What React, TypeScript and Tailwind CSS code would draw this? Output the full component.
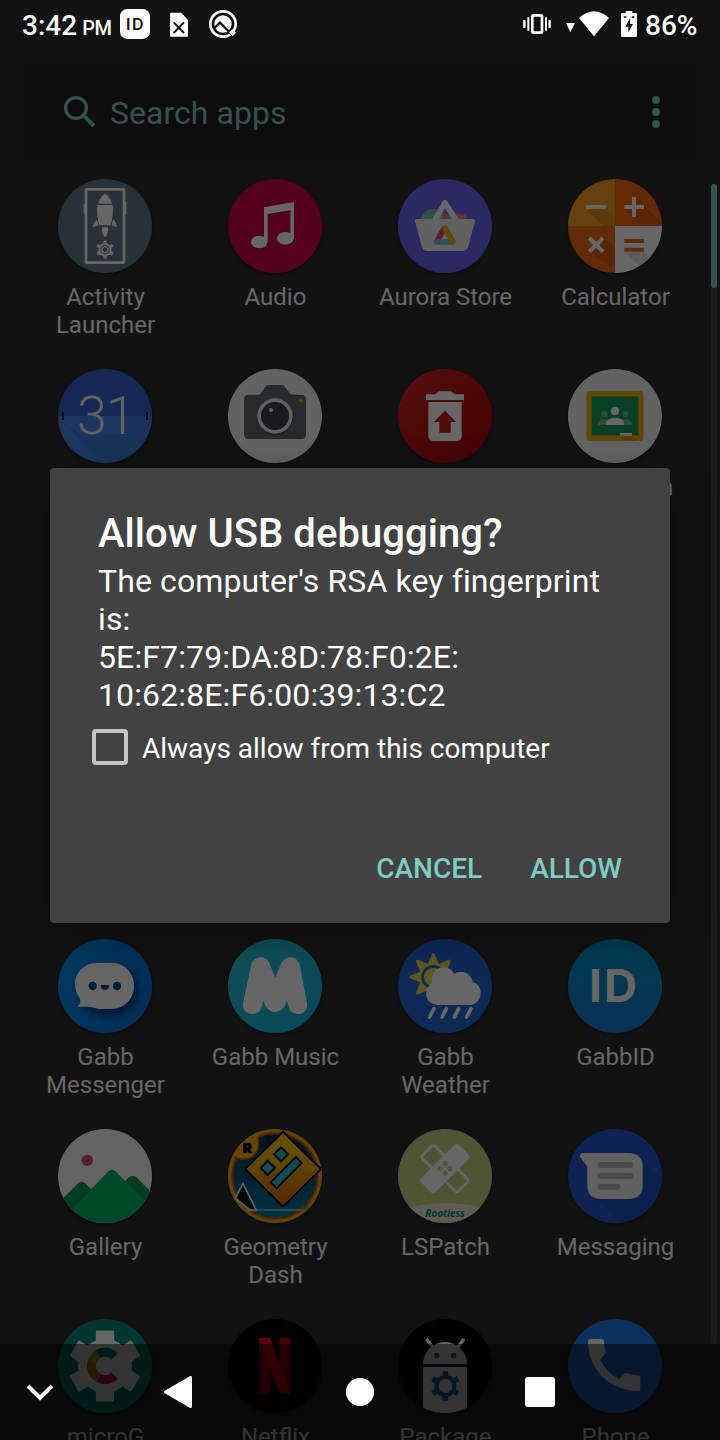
import React from 'react';

type IconProps = { box: string; children: React.ReactNode };

function AppIcon({ box, children }: IconProps) {
  return (
    <svg viewBox={box} className="size-[94px] shrink-0 rounded-full shadow-[0_1px_3px_rgba(0,0,0,0.5)]">
      {children}
    </svg>
  );
}

function gearPath(cx: number, cy: number, outer: number, inner: number, teeth: number, top: number, base: number) {
  const points: string[] = [];
  for (let i = 0; i < teeth; i++) {
    const mid = (i * 2 * Math.PI) / teeth - Math.PI / 2;
    const at = (r: number, a: number) => `${(cx + r * Math.cos(a)).toFixed(1)} ${(cy + r * Math.sin(a)).toFixed(1)}`;
    points.push(at(inner, mid - base), at(outer, mid - top), at(outer, mid + top), at(inner, mid + base));
  }
  return `M${points.join('L')}Z`;
}

const ActivityIcon = () => (
  <AppIcon box="84 27 282 282">
    <rect x="84" y="27" width="282" height="282" fill="#607d8b" />
    <rect x="168" y="58" width="114" height="220" rx="2" fill="none" stroke="#fff" strokeWidth="8" />
    <path d="M163 102v28M287 96v38" stroke="#fff" strokeWidth="4" />
    <path d="M225 71c-10 6-18 18-21 30h42c-3-12-11-24-21-30ZM202 105h46c2 20 0 42-6 61h-34c-6-19-8-41-6-61Z" fill="#fff" />
    <path d="M201 149c-8 6-12 14-12 23 5-3 10-5 17-5Zm48 0c8 6 12 14 12 23-5-3-10-5-17-5ZM216 172h18c2 12-2 23-9 31-7-8-11-19-9-31Z" fill="#fff" />
    <path d={gearPath(225, 239, 27, 20, 6, 0.17, 0.27)} fill="#fff" />
    <circle cx="225" cy="239" r="14" fill="#607d8b" />
    <circle cx="225" cy="239" r="9" fill="none" stroke="#fff" strokeWidth="4" />
  </AppIcon>
);

const AudioIcon = () => (
  <AppIcon box="594 27 282 282">
    <rect x="594" y="27" width="282" height="282" fill="#cf0048" />
    <g transform="translate(1 3)" fill="#8c0030" opacity="0.6">
      <ellipse cx="688" cy="216" rx="25" ry="19" />
      <ellipse cx="766" cy="205" rx="25" ry="19" />
    </g>
    <path d="M702 112 792 96V206H781V121L713 132V217H702Z" fill="#fff" />
    <ellipse cx="688" cy="216" rx="25" ry="19" fill="#fff" />
    <ellipse cx="766" cy="205" rx="25" ry="19" fill="#fff" />
  </AppIcon>
);

const AuroraIcon = () => (
  <AppIcon box="54 27 282 282">
    <rect x="54" y="27" width="282" height="282" fill="#6f64f2" />
    <circle cx="160" cy="158" r="41" fill="#7fc4b0" />
    <rect x="188" y="131" width="71" height="34" rx="10" fill="#ef8091" />
    <path d="M165 150 195 98 228 150" fill="none" stroke="#fff" strokeWidth="17" strokeLinejoin="round" />
    <path d="M110 147H280q6 0 5 7L264 232q-4 11-15 11H141q-11 0-15-11L105 154q-1-7 5-7Z" fill="#f2f2f2" />
    <path d="M171 213 191 178" stroke="#e8487e" strokeWidth="17" strokeLinecap="round" />
    <path d="M171 216H218" stroke="#70c7ee" strokeWidth="17" strokeLinecap="round" />
    <path d="M195 174 219 216" stroke="#f2b600" strokeWidth="17" strokeLinecap="round" />
  </AppIcon>
);

const CalculatorIcon = () => (
  <AppIcon box="564 27 282 282">
    <rect x="564" y="27" width="141" height="141" fill="#f4a224" />
    <rect x="705" y="27" width="141" height="141" fill="#f4690f" />
    <rect x="564" y="168" width="141" height="141" fill="#f4690f" />
    <rect x="705" y="168" width="141" height="141" fill="#fff" />
    <path d="M620 118H678L705 145V168H670Z" fill="#a65c10" opacity="0.3" />
    <path d="M767 82 846 160V168H785L733 116H768Z" fill="#a63c00" opacity="0.25" />
    <path d="M672 202 705 235V280L690 290 628 246 650 226Z" fill="#a63c00" opacity="0.25" />
    <path d="M792 245 820 275 790 300 733 245Z" fill="#999" opacity="0.25" />
    <path d="M618 111H678M733 111H792M762 81V141" stroke="#fff" strokeWidth="12" />
    <path d="M628 204 669 245M669 204 628 245" stroke="#fff" strokeWidth="12" />
    <path d="M733 213H792M733 239H792" stroke="#f4690f" strokeWidth="12" />
  </AppIcon>
);

const CalendarIcon = () => (
  <AppIcon box="84 42 282 282">
    <rect x="84" y="42" width="282" height="141" fill="#3565d2" />
    <rect x="84" y="183" width="282" height="141" fill="#4688ee" />
    <path d="M90 195 210 310 330 324 366 183H290V238H150Z" fill="#2c63ad" opacity="0.25" />
    <path d="M99 171V195M351 171V195" stroke="#151e30" strokeWidth="6" />
    <g fontFamily="Roboto" fontWeight="300" fontSize="162" fill="#f3f3f3">
      <text x="141" y="238">3</text>
      <text x="227" y="238">1</text>
    </g>
  </AppIcon>
);

const CameraIcon = () => (
  <AppIcon box="594 42 282 282">
    <rect x="594" y="42" width="282" height="282" fill="#f4f4f4" />
    <path d="M656 119H688L709 92q2-2 5-2H757q3 0 5 2L783 119H814q14 0 14 14V238q0 14-14 14H656q-14 0-14-14V133q0-14 14-14Z" fill="#63676a" />
    <circle cx="736" cy="187" r="53" fill="#444749" />
    <circle cx="735" cy="183" r="53" fill="#efefef" />
    <circle cx="735" cy="183" r="42" fill="#3c3c4c" />
    <circle cx="735" cy="183" r="38" fill="#434358" />
    <circle cx="723" cy="165" r="6" fill="#fff" />
    <circle cx="811" cy="136" r="6" fill="#f4a800" />
  </AppIcon>
);

const RecoveryIcon = () => (
  <AppIcon box="54 42 282 282">
    <defs>
      <linearGradient id="recovery" x1="0" y1="0" x2="1" y2="1">
        <stop offset="0" stopColor="#db2427" />
        <stop offset="1" stopColor="#a00407" />
      </linearGradient>
    </defs>
    <rect x="54" y="42" width="282" height="282" fill="url(#recovery)" />
    <path d="M138 118H165L177 109H213L225 118H252V135H138ZM145 141H245V242q0 16-16 16H161q-16 0-16-16Z" fill="#fff" />
    <path d="M195 167 228 201H212V233H178V201H162Z" fill="#c4171b" />
  </AppIcon>
);

const ClassroomIcon = () => (
  <AppIcon box="564 42 282 282">
    <rect x="564" y="42" width="282" height="282" fill="#f4f4f4" />
    <rect x="619" y="108" width="172" height="150" rx="12" fill="#eeb10a" />
    <rect x="635" y="124" width="140" height="117" fill="#149c5b" />
    <g fill="#70b895">
      <circle cx="673" cy="178" r="9" />
      <circle cx="736" cy="178" r="9" />
      <path d="M654 210v-5c2-16 36-16 38 0v5ZM718 210v-5c2-16 36-16 38 0v5Z" />
    </g>
    <circle cx="705" cy="168" r="13" fill="#fff" />
    <path d="M678 210v-7c3-20 51-20 54 0v7Z" fill="#fff" />
    <path d="M720 241H756L774 258H737Z" fill="#dc9907" />
    <rect x="720" y="234" width="36" height="8" fill="#fff" />
  </AppIcon>
);

const MessengerIcon = () => (
  <AppIcon box="84 117 282 282">
    <defs>
      <linearGradient id="messenger" x1="0" y1="0" x2="1" y2="0.5">
        <stop offset="0" stopColor="#0093ed" />
        <stop offset="1" stopColor="#0073dc" />
      </linearGradient>
      <filter id="messengerShadow" x="-30%" y="-30%" width="180%" height="180%">
        <feGaussianBlur stdDeviation="14" />
      </filter>
    </defs>
    <rect x="84" y="117" width="282" height="282" fill="url(#messenger)" />
    <rect x="150" y="205" width="174" height="138" rx="69" fill="#002456" opacity="0.8" filter="url(#messengerShadow)" />
    <path d="M205 188H246a66 69 0 0 1 0 139H215C198 327 188 320 170 320H144q-3-2 1-4 8-6 5-20C115 244 146 188 205 188Z" fill="#fff" />
    <circle cx="188" cy="258" r="12.5" fill="#004a8c" />
    <circle cx="261" cy="258" r="12.5" fill="#004a8c" />
    <path d="M212 255H238v2a13 13 0 0 1-26 0Z" fill="#004a8c" />
  </AppIcon>
);

const MusicIcon = () => (
  <AppIcon box="594 117 282 282">
    <defs>
      <linearGradient id="music" x1="0" y1="0" x2="1" y2="1">
        <stop offset="0" stopColor="#2bcad3" />
        <stop offset="1" stopColor="#14afe0" />
      </linearGradient>
    </defs>
    <rect x="594" y="117" width="282" height="282" fill="url(#music)" />
    <path d="M662 202C666 164 709 163 719 191L736 233 753 191C764 163 807 164 811 202L831 310C836 349 782 354 775 318L770 301C763 347 708 348 700 299L696 318C689 354 635 349 639 310Z" fill="#fff" />
  </AppIcon>
);

const WeatherIcon = () => (
  <AppIcon box="54 117 282 282">
    <rect x="54" y="117" width="282" height="282" fill="#2467d2" />
    <path d={gearPath(160, 231, 71, 43, 8, 0.04, 0.39)} fill="#eed84e" />
    <circle cx="160" cy="231" r="36" fill="#2467d2" />
    <circle cx="160" cy="231" r="28" fill="#eed84e" />
    <path d="M172 315a35 35 0 0 1-15-66C146 200 205 186 223 222 245 205 275 221 278 247 313 252 310 315 269 315Z" fill="#fff" />
    <path d="M162 326 149 351M199 326 186 351M236 326 223 351M273 326 260 351" stroke="#fff" strokeWidth="11" strokeLinecap="round" />
  </AppIcon>
);

const GabbIdIcon = () => (
  <AppIcon box="564 117 282 282">
    <defs>
      <linearGradient id="gabbid" x1="0" y1="0" x2="0" y2="1">
        <stop offset="0" stopColor="#0097c4" />
        <stop offset="1" stopColor="#1a79d2" />
      </linearGradient>
    </defs>
    <rect x="564" y="117" width="282" height="282" fill="url(#gabbid)" />
    <text x="627 672" y="306" fontFamily="Inter" fontWeight="700" fontSize="137" fill="#fff">ID</text>
  </AppIcon>
);

const GalleryIcon = () => (
  <AppIcon box="84 27 282 282">
    <rect x="84" y="27" width="282" height="282" fill="#f7f7f7" />
    <circle cx="172" cy="121" r="17" fill="#d84878" />
    <path d="M84 250 144 190q11-9 22 0L200 225 140 309H84ZM230 240 297 172q11-9 22 0L366 219V309Z" fill="#009650" />
    <path d="M110 284 234 155q12-11 24 0L366 263V309H84Z" fill="#00b564" />
  </AppIcon>
);

const GeometryIcon = () => (
  <AppIcon box="594 27 282 282">
    <defs>
      <linearGradient id="geoFace" x1="0" y1="0" x2="0" y2="1">
        <stop offset="0" stopColor="#ffd400" />
        <stop offset="0.55" stopColor="#e8a410" />
        <stop offset="1" stopColor="#db6a00" />
      </linearGradient>
      <linearGradient id="geoSky" x1="0" y1="0" x2="0" y2="1">
        <stop offset="0" stopColor="#052c4c" />
        <stop offset="0.6" stopColor="#07587e" />
        <stop offset="1" stopColor="#0880a8" />
      </linearGradient>
    </defs>
    <rect x="594" y="27" width="282" height="282" fill="#f0a80e" />
    <circle cx="735" cy="168" r="128" fill="url(#geoSky)" stroke="#c95609" strokeWidth="6" />
    <path d="M620 135H665M828 200V270M640 160V200" stroke="#0a618f" strokeWidth="12" opacity="0.35" fill="none" />
    <path d="M650 270H814" stroke="#d9f5ff" strokeWidth="3" />
    <path d="M616 235 639 190 678 270H660Z" fill="#05090d" stroke="#e8faff" strokeWidth="5" />
    <path d="M594 27H680C692 55 685 93 671 107 656 123 620 121 602 108Z" fill="#efb307" />
    <path d="M683 52C690 75 684 95 671 107 656 121 628 119 612 112" fill="none" stroke="#c25b0a" strokeWidth="5" />
    <path d="M759 35 873 147 759 260 645 147Z" fill="url(#geoFace)" stroke="#080400" strokeWidth="6" />
    <path d="M790 163 865 147 759 253 667 160Z" fill="#d96600" opacity="0.22" />
    <path d="M753 82 774 103 753 124 732 103ZM713 122 735 144 713 165 692 144ZM798 111 815 129 740 205 722 187Z" fill="#36bccb" stroke="#04151a" strokeWidth="6" />
    <text x="638" y="99" fontFamily="Inter" fontWeight="900" fontSize="41" fill="#080400" stroke="#080400" strokeWidth="2">R</text>
  </AppIcon>
);

const PatchIcon = () => (
  <AppIcon box="54 27 282 282">
    <rect x="54" y="27" width="282" height="282" fill="#c5d384" />
    <g transform="rotate(45 195 146)">
      <rect x="119" y="120" width="152" height="52" rx="8" fill="none" stroke="#fff" strokeWidth="8" />
    </g>
    <g transform="rotate(-45 195 146)">
      <rect x="115" y="116" width="160" height="60" rx="10" fill="#fff" />
    </g>
    <g fill="#c5d384">
      <circle cx="195" cy="131" r="7.500" />
      <circle cx="180" cy="146" r="7.500" />
      <circle cx="209" cy="146" r="7.500" />
      <circle cx="195" cy="160" r="7.500" />
    </g>
    <path d="M54 270Q195 230 336 270V309H54Z" fill="#e2eccf" />
    <text x="136" y="290" fontFamily="Noto Sans" fontStyle="italic" fontWeight="700" fontSize="31" fill="#10896a" textLength="119" lengthAdjust="spacingAndGlyphs">Rootless</text>
  </AppIcon>
);

const MessagingIcon = () => (
  <AppIcon box="564 27 282 282">
    <rect x="564" y="27" width="282" height="282" fill="#2659cf" />
    <path d="M780 110 846 176V309H720L634 226Z" fill="#1b48a8" opacity="0.45" />
    <path d="M607 99H745q43 0 43 43V196q0 41-43 41H664q-42 0-42-41V140L600 111q-3-10 7-12Z" fill="#f2f2f2" />
    <path d="M661 135H750M661 168H750M661 200H712" stroke="#bcbcbc" strokeWidth="18" strokeLinecap="round" />
  </AppIcon>
);

const MicroGIcon = () => (
  <AppIcon box="174 57 282 282">
    <rect x="174" y="57" width="282" height="282" fill="#008775" />
    <path d={gearPath(315, 198, 110, 79, 6, 0.25, 0.36)} fill="#fff" />
    <circle cx="315" cy="198" r="81" fill="#fff" />
    <g fill="none" strokeWidth="27">
      <path d="M291 164A41 41 0 0 1 344 169" stroke="#00897b" />
      <path d="M276 187A41 41 0 0 1 294 163" stroke="#afb42b" />
      <path d="M296 234A41 41 0 0 1 276 186" stroke="#d07d00" />
      <path d="M344 227A41 41 0 0 1 296 234" stroke="#d8005b" />
    </g>
  </AppIcon>
);

const NetflixIcon = () => (
  <AppIcon box="684 57 282 282">
    <rect x="684" y="57" width="282" height="282" fill="#000" />
    <path d="M777 114H811V278Q793 279 777 282ZM838 114H872V282Q854 279 838 278Z" fill="#b1060f" />
    <path d="M777 114H811L872 282Q853 279 837 278Z" fill="#e50914" />
  </AppIcon>
);

const PackageIcon = () => (
  <AppIcon box="114 57 282 282">
    <rect x="114" y="57" width="282" height="282" fill="#000" />
    <path d="M199 117 219 143M312 117 292 143" stroke="#fff" strokeWidth="10" />
    <path d="M189 192A66 66 0 0 1 321 192ZM189 201H321V339H189Z" fill="#fff" />
    <circle cx="230" cy="167" r="8" fill="#1c70b4" />
    <circle cx="281" cy="167" r="8" fill="#1c70b4" />
    <path d={gearPath(256, 258, 45, 31, 6, 0.18, 0.28)} fill="#1c70b4" />
    <circle cx="256" cy="258" r="33" fill="#1c70b4" />
    <circle cx="256" cy="258" r="21" fill="#fff" />
  </AppIcon>
);

const PhoneIcon = () => (
  <AppIcon box="624 57 282 282">
    <rect x="624" y="57" width="282" height="282" fill="#1f75e6" />
    <path d="M689 117H726q6 0 6 6 0 19 6 36L720 180Q741 218 777 238L797 219q17 6 38 7 6 1 6 6V267q0 6-6 6C749 273 684 208 684 123q0-6 5-6Z" fill="#fff" />
  </AppIcon>
);

type App = { label: string; icon: React.ReactNode };

const rows: App[][] = [
  [
    { label: 'Activity\nLauncher', icon: <ActivityIcon /> },
    { label: 'Audio', icon: <AudioIcon /> },
    { label: 'Aurora Store', icon: <AuroraIcon /> },
    { label: 'Calculator', icon: <CalculatorIcon /> },
  ],
  [
    { label: 'Calendar', icon: <CalendarIcon /> },
    { label: 'Camera', icon: <CameraIcon /> },
    { label: 'Recovery', icon: <RecoveryIcon /> },
    { label: 'Classroom', icon: <ClassroomIcon /> },
  ],
  [],
  [],
  [
    { label: 'Gabb\nMessenger', icon: <MessengerIcon /> },
    { label: 'Gabb Music', icon: <MusicIcon /> },
    { label: 'Gabb\nWeather', icon: <WeatherIcon /> },
    { label: 'GabbID', icon: <GabbIdIcon /> },
  ],
  [
    { label: 'Gallery', icon: <GalleryIcon /> },
    { label: 'Geometry\nDash', icon: <GeometryIcon /> },
    { label: 'LSPatch', icon: <PatchIcon /> },
    { label: 'Messaging', icon: <MessagingIcon /> },
  ],
  [
    { label: 'microG', icon: <MicroGIcon /> },
    { label: 'Netflix', icon: <NetflixIcon /> },
    { label: 'Package', icon: <PackageIcon /> },
    { label: 'Phone', icon: <PhoneIcon /> },
  ],
];

function Launcher() {
  return (
    <div className="flex h-[1440px] w-[720px] flex-col overflow-hidden bg-[#2d2d2d]">
      <div className="mx-6 mt-16 flex h-24 shrink-0 items-center rounded bg-[#212121] pr-[34px] pl-10 text-[#80cbc4]">
        <svg viewBox="192 285 96 96" className="size-8">
          <circle cx="228" cy="321" r="31" fill="none" stroke="currentColor" strokeWidth="10" />
          <path d="M251 344 282 375" stroke="currentColor" strokeWidth="12" />
        </svg>
        <span className="ml-3.5 grow pt-0.5 text-[32px] leading-[38px] tracking-[0.03px]">Search apps</span>
        <svg viewBox="0 0 12 32" className="h-8 w-3" fill="currentColor">
          <circle cx="6" cy="4" r="4" />
          <circle cx="6" cy="16" r="4" />
          <circle cx="6" cy="28" r="4" />
        </svg>
      </div>
      <div className="flex items-start pt-[19px] pl-5">
        <div className="w-[680px]">
          {rows.map((row, i) => (
            <div key={i} className="grid h-[190px] grid-cols-4">
              {row.map((app) => (
                <div key={app.label} className="flex flex-col items-center">
                  {app.icon}
                  <span className="mt-2.5 pl-px text-center text-[24px] leading-7 whitespace-pre text-white">{app.label}</span>
                </div>
              ))}
            </div>
          ))}
        </div>
        <div className="mt-[5px] ml-[11px] h-[1160px] w-1.5 rounded-full bg-[#454545]">
          <div className="h-[104px] rounded-full bg-[#80cbc4]" />
        </div>
      </div>
    </div>
  );
}

function StatusBar() {
  return (
    <div className="absolute inset-x-0 top-0 flex h-12 items-center font-medium text-white">
      <div className="flex w-[120px] items-baseline pt-1 pl-[22px] leading-none">
        <span className="text-[28px]">3:42</span>
        <span className="ml-[5px] text-[20px] tracking-[-0.3px]">PM</span>
      </div>
      <svg viewBox="360 0 360 144" className="h-12 w-[120px]">
        <rect x="360" y="27" width="90" height="90" rx="22" fill="#fff" />
        <text x="378 396" y="90" fontFamily="Inter" fontWeight="600" fontSize="48" fill="#121212">ID</text>
        <path d="M513 38H544L564 60V107q0 3-3 3H513q-3 0-3-3V41q0-3 3-3Z" fill="#fff" />
        <path d="M521 67 552 99M552 67 521 99" stroke="#121212" strokeWidth="6" />
        <circle cx="669" cy="72" r="38" fill="none" stroke="#fff" strokeWidth="8" />
        <circle cx="669" cy="72" r="26" fill="#fff" />
        <path d="M643 84 660 68 703 111" fill="none" stroke="#121212" strokeWidth="7" />
        <path d="M687 97 697 88 708 98 698 108Z" fill="#fff" />
      </svg>
      <svg viewBox="480 0 360 144" className="ml-[280px] h-12 w-[120px]" fill="#fff">
        <rect x="517" y="46" width="29" height="52" rx="3" fill="none" stroke="#fff" strokeWidth="8" />
        <path d="M505 52V92M558 52V92" stroke="#fff" strokeWidth="6" />
        <path d="M493 60V84M569 60V84" stroke="#fff" strokeWidth="7" />
        <path d="M618 69H645L631 97Z" />
        <path d="M657 54Q702 14 747 54L702 109Z" />
        <path d="M797 33H817V39H828q3 0 3 3V108q0 3-3 3H786q-3 0-3-3V42q0-3 3-3H797Z" />
        <path d="M791 51H799M815 51H823" stroke="#121212" strokeWidth="4" />
        <path d="M810 55V72H819L805 97V80H796Z" fill="#121212" />
      </svg>
      <span className="ml-[5px] pt-1 text-[28px] leading-none">86%</span>
    </div>
  );
}

function NavBar() {
  return (
    <div className="absolute inset-x-0 bottom-0 flex h-24 items-center bg-black/50">
      <div className="flex w-20 justify-center">
        <svg viewBox="0 0 28 18" className="mt-0.5 h-[18px] w-7">
          <path d="M2 2 14 14 26 2" fill="none" stroke="#fff" strokeWidth="4" />
        </svg>
      </div>
      <div className="flex w-[196px] justify-center">
        <svg viewBox="0 0 28 32" className="h-8 w-7">
          <path d="M1.500 16 26.500 1.500V30.500Z" fill="#fff" stroke="#fff" strokeWidth="3" strokeLinejoin="round" />
        </svg>
      </div>
      <div className="flex w-[168px] justify-center">
        <div className="size-7 rounded-full bg-white" />
      </div>
      <div className="flex w-[192px] justify-center">
        <div className="size-[30px] rounded-[3px] bg-white" />
      </div>
    </div>
  );
}

function DebugDialog() {
  return (
    <div className="absolute top-[468px] left-[50px] flex h-[455px] w-[620px] flex-col rounded bg-[#424242] px-12 text-white shadow-[0_12px_40px_rgba(0,0,0,0.3)]">
      <h1 className="pt-[42px] text-[40px] leading-[47px] font-medium tracking-[0.05px]">Allow USB debugging?</h1>
      <div className="pt-[5px] text-[32px] leading-[38px] tracking-[0.12px] whitespace-nowrap">
        <p>The computer's RSA key fingerprint</p>
        <p>is:</p>
        <p>5E:F7:79:DA:8D:78:F0:2E:</p>
        <p>10:62:8E:F6:00:39:13:C2</p>
      </div>
      <label className="-ml-1.5 mt-[15px] flex h-9 items-center gap-3.5 text-[28px]">
        <span className="size-9 rounded-[4px] border-4 border-[#c6c6c6]" />
        <span className="pt-[3px]">Always allow from this computer</span>
      </label>
      <div className="mt-[87px] flex justify-end gap-12 text-[28px] leading-[34px] font-medium text-[#80cbc4]">
        <button>CANCEL</button>
        <button>ALLOW</button>
      </div>
    </div>
  );
}

export default function App() {
  return (
    <div className="relative h-[1440px] w-[720px] overflow-hidden bg-[#121212] font-['Roboto',sans-serif]">
      <Launcher />
      <div className="absolute inset-0 bg-black/60" />
      <DebugDialog />
      <StatusBar />
      <NavBar />
    </div>
  );
}
